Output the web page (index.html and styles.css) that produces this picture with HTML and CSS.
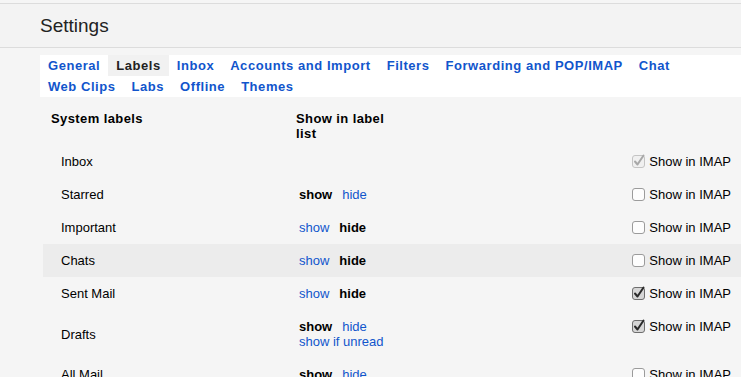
FILE: index.html
```html
<!DOCTYPE html>
<html lang="en">
<head>
    <meta charset="UTF-8">
    <meta name="viewport" content="width=device-width, initial-scale=1.0">
    <title>Settings</title>
    <link rel="stylesheet" href="styles.css">
</head>
<body>

    <div class="header">
        <h1 class="title">Settings</h1>
    </div>

    <div class="tabs">
        <a class="tab" href="#">General</a>
        <span class="tab active">Labels</span>
        <a class="tab" href="#">Inbox</a>
        <a class="tab" href="#">Accounts and Import</a>
        <a class="tab" href="#">Filters</a>
        <a class="tab" href="#">Forwarding and POP/IMAP</a>
        <a class="tab" href="#">Chat</a>
        <div class="tab-break"></div>
        <a class="tab" href="#">Web Clips</a>
        <a class="tab" href="#">Labs</a>
        <a class="tab" href="#">Offline</a>
        <a class="tab" href="#">Themes</a>
    </div>

    <div class="labels">
        <div class="row head">
            <div class="name">System labels</div>
            <div class="show">Show in label list</div>
            <div class="imap"></div>
        </div>

        <div class="row">
            <div class="name">Inbox</div>
            <div class="show"></div>
            <label class="imap">
                <svg class="cb" viewBox="0 0 13 13"><rect class="box disabled" x="0.5" y="0.5" width="12" height="12" rx="2.5"/><path class="tick disabled" d="M3 6.5 L5.5 9.5 L11.5 0.5"/></svg>
                Show in IMAP
            </label>
        </div>

        <div class="row">
            <div class="name">Starred</div>
            <div class="show"><b>show</b><a href="#">hide</a></div>
            <label class="imap">
                <svg class="cb" viewBox="0 0 13 13"><rect class="box" x="0.5" y="0.5" width="12" height="12" rx="2.5"/></svg>
                Show in IMAP
            </label>
        </div>

        <div class="row">
            <div class="name">Important</div>
            <div class="show"><a href="#">show</a><b>hide</b></div>
            <label class="imap">
                <svg class="cb" viewBox="0 0 13 13"><rect class="box" x="0.5" y="0.5" width="12" height="12" rx="2.5"/></svg>
                Show in IMAP
            </label>
        </div>

        <div class="row hover">
            <div class="name">Chats</div>
            <div class="show"><a href="#">show</a><b>hide</b></div>
            <label class="imap">
                <svg class="cb" viewBox="0 0 13 13"><rect class="box" x="0.5" y="0.5" width="12" height="12" rx="2.5"/></svg>
                Show in IMAP
            </label>
        </div>

        <div class="row">
            <div class="name">Sent Mail</div>
            <div class="show"><a href="#">show</a><b>hide</b></div>
            <label class="imap">
                <svg class="cb" viewBox="0 0 13 13"><rect class="box checked" x="0.5" y="0.5" width="12" height="12" rx="2.5"/><path class="tick" d="M3 6.5 L5.5 9.5 L11.5 0.5"/></svg>
                Show in IMAP
            </label>
        </div>

        <div class="row">
            <div class="name">Drafts</div>
            <div class="show"><b>show</b><a href="#">hide</a><br><a href="#">show if unread</a></div>
            <label class="imap">
                <svg class="cb" viewBox="0 0 13 13"><rect class="box checked" x="0.5" y="0.5" width="12" height="12" rx="2.5"/><path class="tick" d="M3 6.5 L5.5 9.5 L11.5 0.5"/></svg>
                Show in IMAP
            </label>
        </div>

        <div class="row">
            <div class="name">All Mail</div>
            <div class="show"><b>show</b><a href="#">hide</a></div>
            <label class="imap">
                <svg class="cb" viewBox="0 0 13 13"><rect class="box" x="0.5" y="0.5" width="12" height="12" rx="2.5"/></svg>
                Show in IMAP
            </label>
        </div>
    </div>

</body>
</html>
```

FILE: styles.css
```css
body {
    margin: 0;
    font-family: "Liberation Sans", Arial, sans-serif;
    font-size: 13px;
    color: #000;
    background-color: #f5f5f5;
}
a {
    color: #15c;
    text-decoration: none;
}
.header {
    margin-top: 3px;
    padding: 11px 0 10px 40px;
    background: #f3f3f3;
    border-top: 1px solid #dcdcdc;
    border-bottom: 1px solid #dcdcdc;
}
.title {
    margin: 0;
    font-size: 19px;
    font-weight: normal;
    line-height: 22px;
    color: #222;
}
.tabs {
    display: flex;
    flex-wrap: wrap;
    margin: 7px 0 0 40px;
    background: white;
}
.tab {
    padding: 0 8px;
    line-height: 21px;
    font-weight: bold;
    letter-spacing: 0.55px;
    color: #15c;
}
.tab.active {
    color: #222;
    background: #f1f1f1;
}
.tab-break {
    flex-basis: 100%;
}
.labels {
    margin: 14px 0 0 43px;
}
.row {
    display: grid;
    grid-template-columns: 253px 95px 1fr;
    padding: 9px 10px 9px 0;
    line-height: 15px;
}
.row.hover {
    background: #ececec;
}
.row .name {
    align-self: center;
    padding-left: 18px;
}
.row .show {
    padding-left: 3px;
    white-space: nowrap;
}
.row .show b,
.row .show > a:first-child {
    margin-right: 10px;
}
.row.head {
    padding: 0 10px 4px 0;
    font-weight: bold;
    letter-spacing: 0.4px;
}
.row.head .name {
    align-self: start;
    padding-left: 8px;
}
.row.head .show {
    padding-left: 0;
    white-space: normal;
}
.imap {
    display: flex;
    justify-content: flex-end;
    align-items: center;
    gap: 4px;
    height: 15px;
    white-space: nowrap;
}
.cb {
    width: 13px;
    height: 13px;
    overflow: visible;
}
.box {
    fill: #fdfdfd;
    stroke: #9b9b9b;
    stroke-width: 1;
}
.box.checked {
    fill: #d6d6d6;
    stroke: #6e6e6e;
}
.box.disabled {
    fill: #f0f0f0;
    stroke: #c4c4c4;
}
.tick {
    fill: none;
    stroke: #2a2a2a;
    stroke-width: 2;
    stroke-linecap: round;
    stroke-linejoin: round;
}
.tick.disabled {
    stroke: #a8a8a8;
}
```
